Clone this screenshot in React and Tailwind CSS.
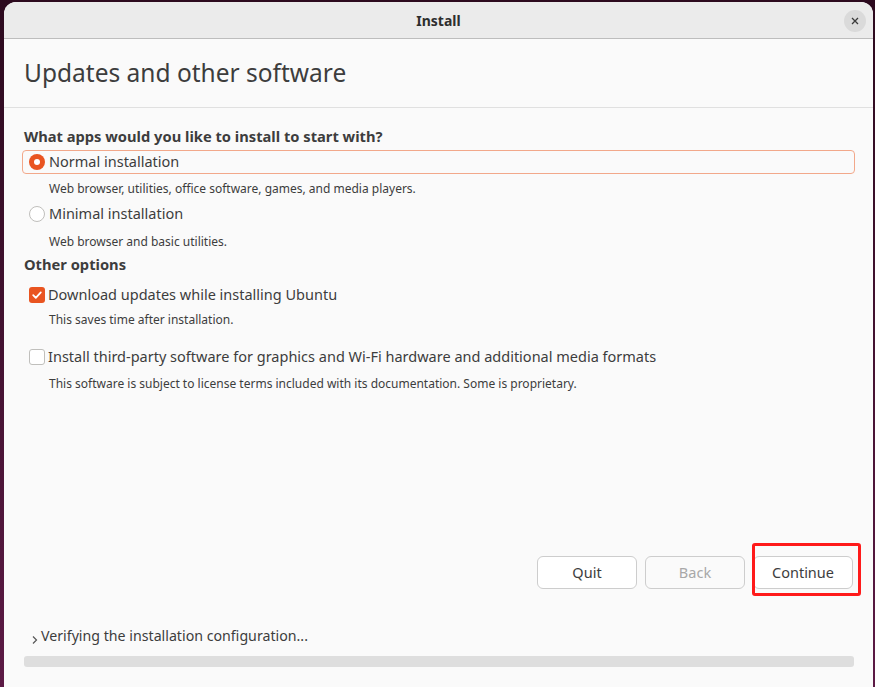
import React, { useState } from "react";

const font = { fontFamily: '"Noto Sans", "Open Sans", sans-serif' };

const Radio = ({ checked }) =>
  checked ? (
    <span className="w-[16px] h-[16px] rounded-full bg-[#e95420] flex items-center justify-center shrink-0">
      <span className="w-[6px] h-[6px] rounded-full bg-white" />
    </span>
  ) : (
    <span className="w-[16px] h-[16px] rounded-full border border-[#c0bfbc] bg-white shrink-0" />
  );

const Check = ({ checked }) =>
  checked ? (
    <span className="w-[16px] h-[16px] rounded-[3px] bg-[#e95420] flex items-center justify-center shrink-0">
      <svg width="12" height="12" viewBox="0 0 12 12" fill="none">
        <path d="M2.2 6.2 L4.8 8.8 L9.8 3.4" stroke="white" strokeWidth="1.8" strokeLinecap="round" strokeLinejoin="round" />
      </svg>
    </span>
  ) : (
    <span className="w-[16px] h-[16px] rounded-[3px] border border-[#c0bfbc] bg-white shrink-0" />
  );

const App = () => {
  const [install, setInstall] = useState("normal");
  const [updates, setUpdates] = useState(true);
  const [thirdParty, setThirdParty] = useState(false);

  return (
    <div
      className="w-[875px] h-[687px] overflow-hidden bg-gradient-to-b from-[#2c0a1e] to-[#5c1a45] pl-[4px] pr-[2px] pt-[2px]"
      style={font}
    >
      <div className="h-[685px] rounded-t-[12px] bg-[#fafafa] flex flex-col overflow-hidden text-[#3d3d3d]">
        {/* Title bar */}
        <div className="h-[37px] shrink-0 bg-[#ebebeb] border-b border-[#bdbdbd] relative flex items-center justify-center">
          <span className="text-[14px] font-bold text-[#2e2e2e]">Install</span>
          <button className="absolute right-[7px] top-[8px] w-[22px] h-[22px] rounded-full bg-[#dadada] flex items-center justify-center">
            <svg width="10" height="10" viewBox="0 0 10 10">
              <path d="M2 2 L8 8 M8 2 L2 8" stroke="#3a3a3a" strokeWidth="1.3" />
            </svg>
          </button>
        </div>

        {/* Header */}
        <div className="h-[69px] shrink-0 border-b border-[#e0e0e0] flex items-center px-[20px]">
          <h1 className="text-[24.5px] text-[#3d3d3d]">Updates and other software</h1>
        </div>

        {/* Body */}
        <div className="flex flex-col px-[18px] pt-[19px] flex-1">
          <div className="text-[14.7px] font-bold leading-[18px] text-[#3d3d3d] pl-[2px]">
            What apps would you like to install to start with?
          </div>
          <div
            className={`mt-[5px] h-[24px] flex items-center gap-[4px] pl-[6px] rounded-[4px] border ${
              install === "normal" ? "border-[#f2a88a]" : "border-transparent"
            } cursor-pointer`}
            onClick={() => setInstall("normal")}
          >
            <Radio checked={install === "normal"} />
            <span className="text-[14.5px]">Normal installation</span>
          </div>
          <div className="pl-[27px] mt-[5px] text-[12px] leading-[20px]">
            Web browser, utilities, office software, games, and media players.
          </div>
          <div
            className="mt-[3px] h-[24px] flex items-center gap-[4px] pl-[6px] border border-transparent cursor-pointer"
            onClick={() => setInstall("minimal")}
          >
            <Radio checked={install === "minimal"} />
            <span className="text-[14.5px]">Minimal installation</span>
          </div>
          <div className="pl-[27px] mt-[6px] text-[12px] leading-[20px]">
            Web browser and basic utilities.
          </div>
          <div className="mt-[2px] text-[14.7px] font-bold leading-[20px] pl-[2px]">Other options</div>

          <div
            className="mt-[10px] h-[22px] flex items-center gap-[3px] pl-[7px] cursor-pointer"
            onClick={() => setUpdates(!updates)}
          >
            <Check checked={updates} />
            <span className="text-[14.5px]">Download updates while installing Ubuntu</span>
          </div>
          <div className="pl-[27px] mt-[4px] text-[12px] leading-[20px]">
            This saves time after installation.
          </div>

          <div
            className="mt-[16px] h-[22px] flex items-center gap-[3px] pl-[7px] cursor-pointer"
            onClick={() => setThirdParty(!thirdParty)}
          >
            <Check checked={thirdParty} />
            <span className="text-[14.5px]">
              Install third-party software for graphics and Wi-Fi hardware and additional media formats
            </span>
          </div>
          <div className="pl-[27px] mt-[6px] text-[12px] leading-[20px]">
            This software is subject to license terms included with its documentation. Some is proprietary.
          </div>

          <div className="flex-1" />

          {/* Buttons */}
          <div className="flex justify-end gap-[8px] pr-[2px]">
            <button className="w-[100px] h-[33px] rounded-[6px] border border-[#cdcdcd] bg-white text-[14.5px] text-[#3d3d3d]">
              Quit
            </button>
            <button className="w-[100px] h-[33px] rounded-[6px] border border-[#cdcdcd] bg-[#fafafa] text-[14.5px] text-[#a8a8a8]">
              Back
            </button>
            <div className="relative">
              <button className="w-[100px] h-[33px] rounded-[6px] border border-[#cdcdcd] bg-white text-[14.5px] text-[#3d3d3d]">
                Continue
              </button>
              <div className="absolute left-[-1px] top-[-13px] w-[109px] h-[53px] border-[3px] border-[#ff1a1a] rounded-[3px] pointer-events-none" />
            </div>
          </div>

          {/* Progress */}
          <div className="mt-[37px] flex items-center pl-[9px] h-[20px]">
            <svg width="8" height="10" viewBox="0 0 8 10" className="mt-[8px] mr-[2px]">
              <path d="M2 1.5 L5.5 5 L2 8.5" stroke="#555" strokeWidth="1.2" fill="none" />
            </svg>
            <span className="text-[14.2px] text-[#3d3d3d]">Verifying the installation configuration...</span>
          </div>
          <div className="mt-[10px] ml-[2px] mr-[1px] h-[11px] rounded-[3px] bg-[#dedede]" />
          <div className="h-[20px]" />
        </div>
      </div>
    </div>
  );
};

export default App;
